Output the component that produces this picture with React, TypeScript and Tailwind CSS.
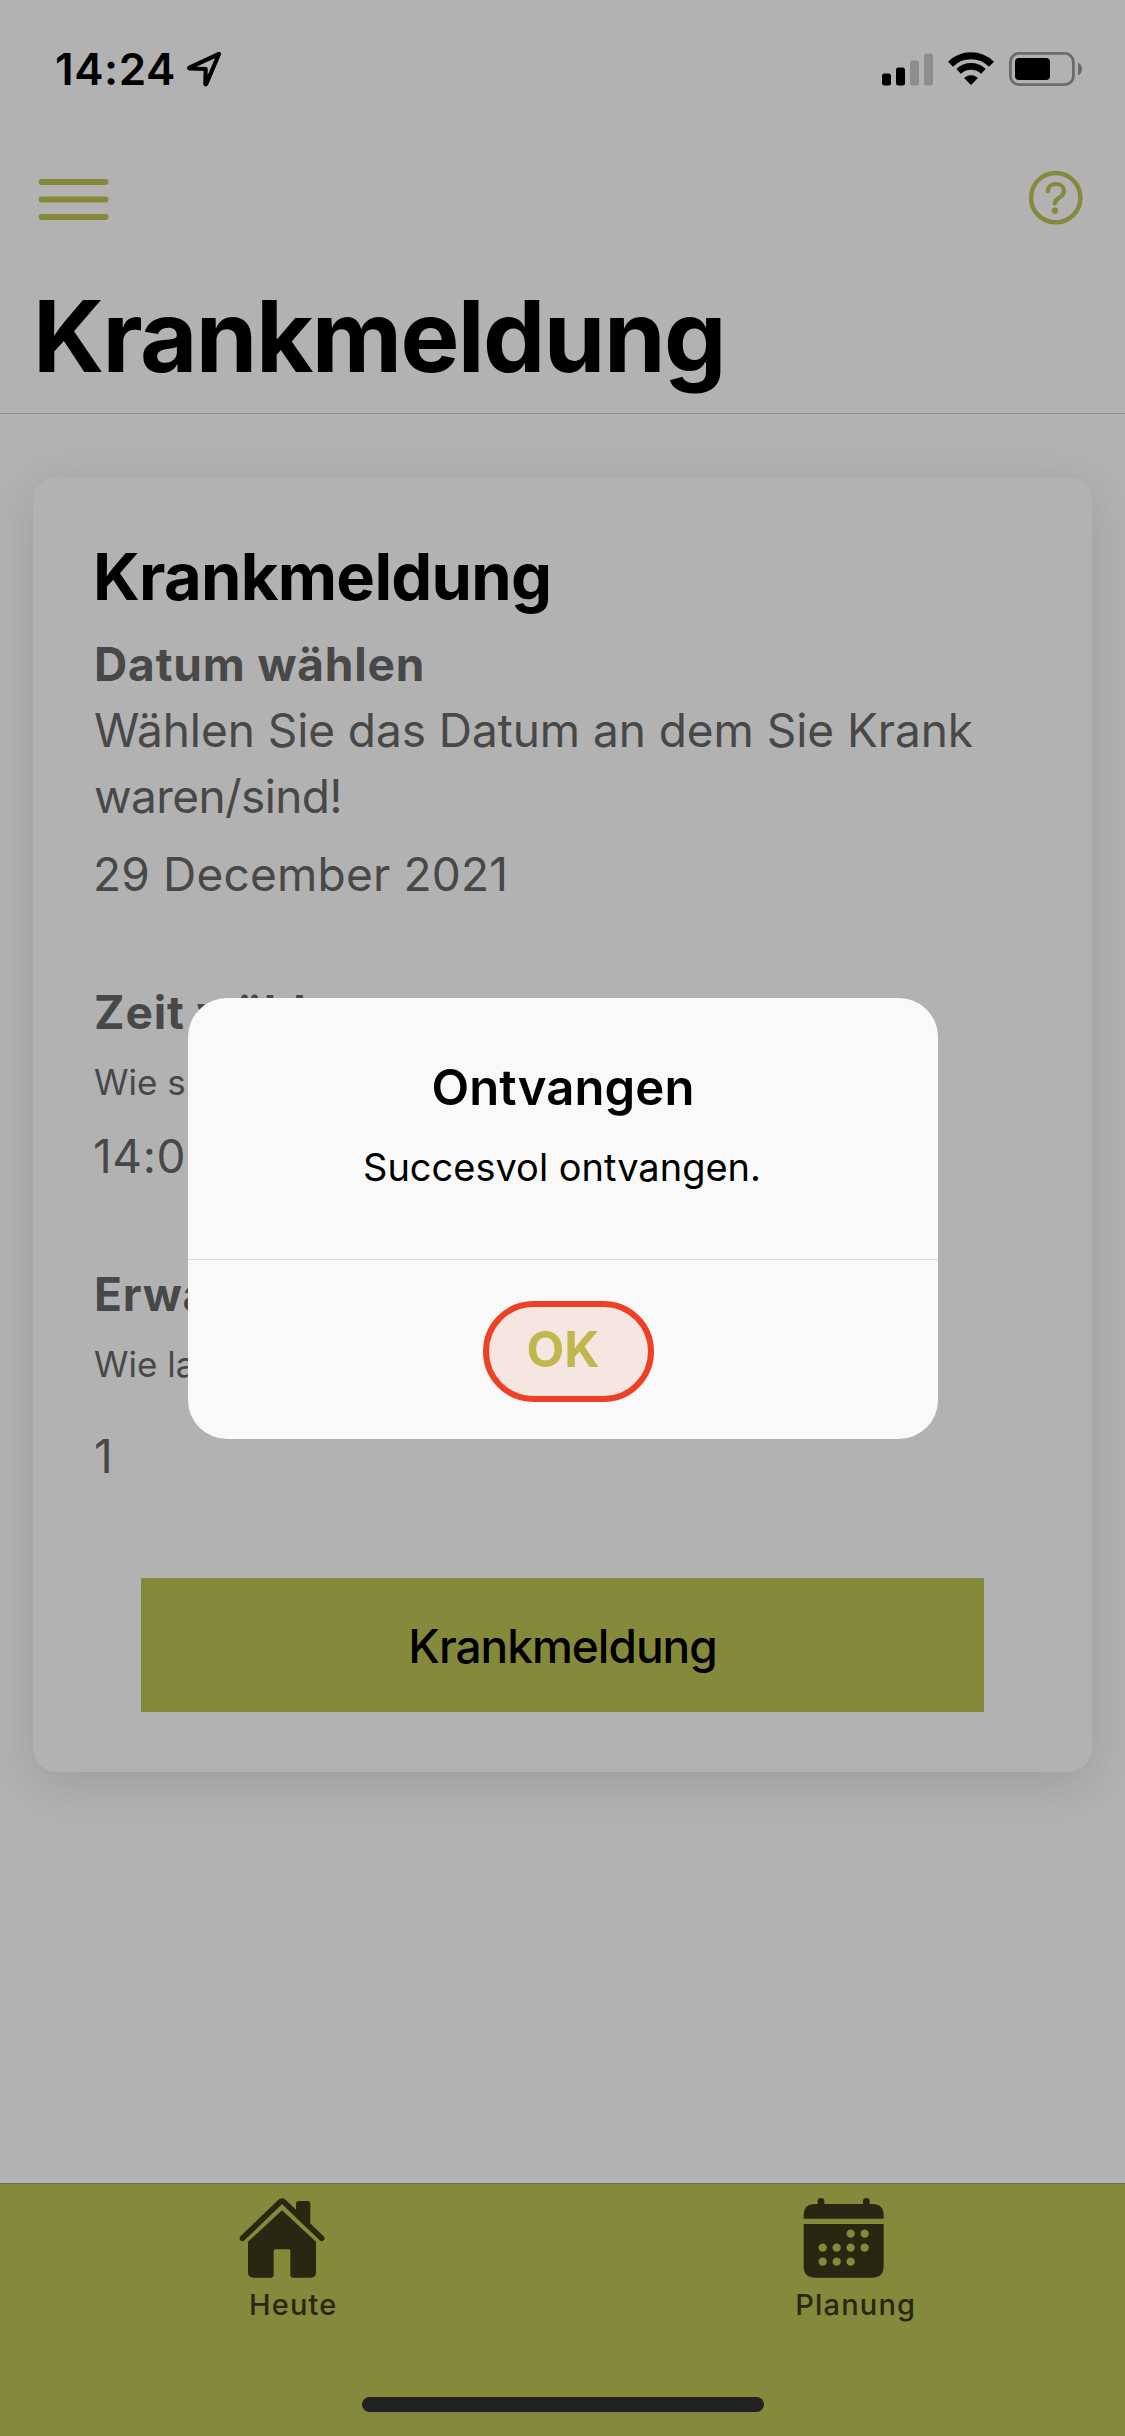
import React from "react";

interface FieldProps {
    label: string;
    hint: React.ReactNode;
    value: string;
    hintClassName: string;
    valueClassName: string;
}

const StatusBar = () => (
    <div className="flex items-center justify-between h-[138px] pl-[55px] pr-[43px] text-black">
        <div className="flex items-center">
            <span className="text-[44px] leading-[60px] font-semibold tracking-[0.6px]">14:24</span>
            <svg className="ml-[10px]" width="36.7" height="37.3" viewBox="558 92 110 112" fill="none">
                <path
                    d="M657 104 L568 145 Q566 147 569 147.500 L617 149 L616 194 Q617 197 619 193 Z"
                    stroke="currentColor"
                    strokeWidth="12.5"
                    strokeLinejoin="round"
                />
            </svg>
        </div>
        <div className="flex items-center gap-[15px]">
            <svg width="51" height="33" viewBox="0 0 51 33">
                <rect x="0" y="20.500" width="9" height="12" rx="2.500" />
                <rect x="14" y="14.500" width="9" height="18" rx="2.500" />
                <rect x="28" y="7.500" width="9" height="25" rx="2.500" fill="#8e8e8e" />
                <rect x="42" y="0.500" width="9" height="32" rx="2.500" fill="#8e8e8e" />
            </svg>
            <svg width="46" height="33.300" viewBox="294 96 138 100">
                <path d="M301.500 132.500 A87 87 0 0 1 424.500 132.500" fill="none" stroke="black" strokeWidth="21" />
                <path d="M325.800 154 A54.500 54.500 0 0 1 400.200 154" fill="none" stroke="black" strokeWidth="20" />
                <path d="M343.500 174 A29 29 0 0 1 382.500 174 L363 194 Z" stroke="black" strokeWidth="2" strokeLinejoin="round" />
            </svg>
            <svg width="73" height="34" viewBox="0 0 73 34">
                <rect x="1.400" y="1.400" width="63" height="31.200" rx="8.500" fill="none" stroke="#6b6b6b" strokeWidth="2.800" />
                <rect x="6" y="6" width="35" height="22" rx="4" />
                <path d="M69 10.700 Q73 12.500 73 17 T69 23.300 Z" fill="#6b6b6b" />
            </svg>
        </div>
    </div>
);

const NavBar = () => (
    <div className="flex items-center justify-between h-[122px] pl-[38px] pr-[41px] text-[#85893b]">
        <svg width="71" height="42" viewBox="0 0 71 42" stroke="currentColor" strokeWidth="6" strokeLinecap="round">
            <path d="M3.600 4H67.500M3.600 21.500H67.500M3.600 39H67.500" />
        </svg>
        <svg width="56" height="60" viewBox="0 0 56 60" fill="none" stroke="currentColor">
            <circle cx="27.700" cy="28.700" r="24.700" strokeWidth="4.400" />
            <path
                d="M19.800 22.300 C20 17.500 23.500 15 28 15 C32.800 15 36 18 36 22 C36 29.500 26.800 28 26.800 34.500"
                strokeWidth="4.2"
                strokeLinecap="round"
            />
            <circle cx="26.900" cy="41.700" r="3.100" fill="currentColor" stroke="none" />
        </svg>
    </div>
);

const Field = ({ label, hint, value, hintClassName, valueClassName }: FieldProps) => (
    <div className="text-[46px] leading-[66px] text-[#484848]">
        <h3 className="pl-px font-bold tracking-[0.85px]">{label}</h3>
        <div className={hintClassName}>{hint}</div>
        <p className={valueClassName}>{value}</p>
    </div>
);

const HouseIcon = () => (
    <svg className="ml-0.5" width="88" height="84" viewBox="0 0 264 252">
        <path d="M174 22 Q174 15 181 15 H209 Q217 15 217 23 V98 L174 58 Z" fill="currentColor" />
        <path
            d="M13.500 127 L124 20 Q132 12 140 20 L251 127"
            fill="none"
            stroke="currentColor"
            strokeWidth="17"
            strokeLinecap="round"
        />
        <path
            d="M132 43 L234 137 V229 Q234 245 218 245 H164 Q157 245 157 238 V165 Q157 160 152 160 H112 Q107 160 107 165 V238 Q107 245 100 245 H46 Q30 245 30 229 V137 Z"
            fill="currentColor"
        />
    </svg>
);

const calendarDots = [
    [146, 113], [188, 113],
    [62, 155], [104, 155], [146, 155], [188, 155],
    [62, 197], [104, 197], [146, 197],
];

const CalendarIcon = () => (
    <svg className="mr-px" width="83.3" height="84" viewBox="0 0 250 252">
        <path
            d="M5 68 V58 Q5 24 39 24 H47 V16 Q47 6 57 6 T67 16 V24 H183 V16 Q183 6 193 6 T203 16 V24 H211 Q245 24 245 58 V68 Z"
            fill="currentColor"
        />
        <path d="M5 84 H245 V211 Q245 245 211 245 H39 Q5 245 5 211 Z" fill="currentColor" />
        {calendarDots.map(([cx, cy]) => (
            <circle key={`${cx}-${cy}`} cx={cx} cy={cy} r="12.5" fill="#85893b" />
        ))}
    </svg>
);

const TabBar = () => (
    <nav className="mt-auto grid grid-cols-2 h-[253px] pt-3 border-t border-[#6e704b] bg-[#85893b] text-[#282711]">
        <div className="flex flex-col items-center">
            <HouseIcon />
            <span className="mt-[5px] pl-[24px] text-[29px] leading-[40px] font-medium tracking-[1.2px]">Heute</span>
        </div>
        <div className="flex flex-col items-center">
            <CalendarIcon />
            <span className="mt-[5px] pl-[24px] text-[29px] leading-[40px] font-medium tracking-[1.2px]">Planung</span>
        </div>
    </nav>
);

const Alert = () => (
    <div className="absolute inset-0 flex items-center justify-center pl-px pt-px">
        <div className="w-[750px] h-[441px] rounded-[39px] bg-[#f9f9f9] text-center text-black overflow-hidden">
            <div className="h-[262px] pt-[60px] border-b border-[#dcdcdc]">
                <h2 className="text-[49px] leading-[60px] font-semibold tracking-[0.1px]">Ontvangen</h2>
                <p className="mt-6 pr-0.5 text-[38px] leading-[50px]">Succesvol ontvangen.</p>
            </div>
            <button className="relative block w-full h-[179px] text-[49px] font-bold text-[#c2b74c]">
                <span className="absolute left-[295px] top-[41px] w-[171px] h-[101px] rounded-full border-[6px] border-[#ee4025] bg-[#f5e6e2]"></span>
                <span className="relative">OK</span>
            </button>
        </div>
    </div>
);

export default function App() {
    return (
        <div className="relative flex flex-col w-[1125px] h-[2436px] overflow-hidden bg-[#b2b2b2] font-['Inter',sans-serif]">
            <StatusBar />
            <NavBar />
            <h1 className="h-[154px] pl-[33px] border-b border-[#8e8e8e] text-[99px] leading-[152px] font-bold tracking-[-1.6px] text-black">
                Krankmeldung
            </h1>

            <section className="mx-[33px] mt-[63px] h-[1295px] pt-[60px] px-[60px] rounded-3xl bg-[#b2b2b2] shadow-[0_12px_48px_rgba(0,0,0,0.12)]">
                <h2 className="mb-[14px] text-[65px] leading-[80px] font-bold tracking-[-0.7px] text-black">Krankmeldung</h2>
                <div className="flex flex-col gap-[72px]">
                    <Field
                        label="Datum wählen"
                        hint={
                            <>
                                <p className="tracking-[-0.06px] whitespace-nowrap">Wählen Sie das Datum an dem Sie Krank</p>
                                <p className="tracking-[-0.6px]">waren/sind!</p>
                            </>
                        }
                        value="29 December 2021"
                        hintClassName="pl-px"
                        valueClassName="mt-3 tracking-[0.2px]"
                    />
                    <Field
                        label="Zeit wählen"
                        hint="Wie spät"
                        value="14:00"
                        hintClassName="mt-1 pl-px text-[35px]"
                        valueClassName="mt-2 tracking-[0.6px]"
                    />
                    <Field
                        label="Erwartet"
                        hint="Wie lange"
                        value="1"
                        hintClassName="mt-1 pl-px text-[35px]"
                        valueClassName="mt-[26px] pl-px"
                    />
                </div>
                <button className="block mx-auto mt-[89px] w-[843px] h-[134px] pt-0.5 bg-[#85893b] text-[46px] font-medium tracking-[-1px] text-black">
                    Krankmeldung
                </button>
            </section>

            <TabBar />
            <div className="absolute bottom-6 left-[362px] w-[402px] h-[15px] rounded-full bg-[#222222]"></div>
            <Alert />
        </div>
    );
}
